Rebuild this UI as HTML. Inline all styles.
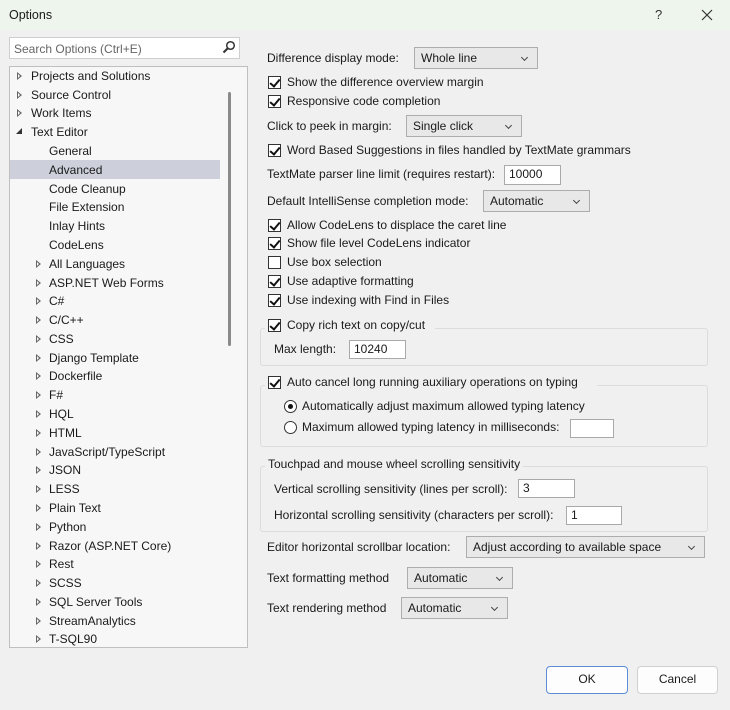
<!DOCTYPE html>
<html><head><meta charset="utf-8"><style>
*{box-sizing:border-box;margin:0;padding:0}
body{width:730px;height:710px;background:#f0f0f0;font-family:"Liberation Sans",sans-serif;font-size:12px;color:#1a1a1a;position:relative;overflow:hidden}
.a{position:absolute;white-space:nowrap}
.t{position:absolute;white-space:nowrap;line-height:14px;transform:translateY(-7px)}
.cb{position:absolute;width:13px;height:13px;border:1px solid #333;background:#fff;transform:translateY(-6px)}
.cb.on::after{content:"";position:absolute;left:3px;top:0px;width:4px;height:8px;border:solid #111;border-width:0 2px 2px 0;transform:rotate(40deg)}
.dd{position:absolute;background:#e8e8e8;border:1px solid #adadad;line-height:20px;padding-left:6px}
.dd::after{content:"";position:absolute;right:10px;top:7px;width:4px;height:4px;border:solid #444;border-width:0 1px 1px 0;transform:rotate(45deg)}
.in{position:absolute;background:#fff;border:1px solid #a9a9a9;line-height:17px;padding-left:4px}
.g{position:absolute;border:1px solid #dcdcdc;border-radius:3px}
.tr{position:absolute;left:31px;white-space:nowrap;line-height:14px;transform:translateY(-7px)}
.tri{position:absolute;left:17px;width:0;height:0;border-top:4px solid transparent;border-bottom:4px solid transparent;border-left:5px solid #666;transform:translateY(-4px)}
.tri::after{content:"";position:absolute;left:-4px;top:-2px;border-top:2px solid transparent;border-bottom:2px solid transparent;border-left:2.5px solid #fafafa}
.rb{position:absolute;width:13px;height:13px;border:1px solid #333;border-radius:50%;background:#fff;transform:translateY(-6px)}
.btn{position:absolute;background:#fdfdfd;border:1px solid #d0d0d0;border-radius:4px;text-align:center;line-height:25px}
</style></head><body>
<div class="a" style="left:0;top:0;width:730px;height:30px;background:#eef5ec"></div>
<div class="a" style="left:9px;top:8px;font-size:12.5px">Options</div>
<div class="a" style="left:655px;top:7px;font-size:13px;color:#333">?</div>
<svg class="a" style="left:701px;top:9px" width="12" height="12"><path d="M1 1L11 11M11 1L1 11" stroke="#333" stroke-width="1.2"/></svg>

<div class="a" style="left:9px;top:37px;width:231px;height:22px;background:#fff;border:1px solid #cfcfcf"></div>
<div class="a" style="left:14px;top:42px;color:#666">Search Options (Ctrl+E)</div>
<svg class="a" style="left:222px;top:40px" width="14" height="14"><circle cx="8.5" cy="5.5" r="3.8" fill="none" stroke="#333" stroke-width="1.5"/><path d="M6 8L1.5 12.5" stroke="#333" stroke-width="2"/></svg>

<div class="a" style="left:9px;top:66px;width:239px;height:582px;background:#f7f7f7;border:1px solid #bfbfbf"></div>
<div class="a" style="left:10px;top:160px;width:210px;height:19px;background:#cdd0da"></div>
<div class="a" style="left:228px;top:92px;width:3px;height:254px;background:#8a8a8a;border-radius:2px"></div>

<div class="tri" style="top:76px"></div><div class="tr" style="top:76px">Projects and Solutions</div>
<div class="tri" style="top:95px"></div><div class="tr" style="top:95px">Source Control</div>
<div class="tri" style="top:113px"></div><div class="tr" style="top:113px">Work Items</div>
<div class="a" style="left:16px;top:128px;border-left:6px solid transparent;border-bottom:6px solid #333"></div><div class="tr" style="top:132px">Text Editor</div>
<div class="tr" style="top:151px;left:49px">General</div>
<div class="tr" style="top:170px;left:49px">Advanced</div>
<div class="tr" style="top:189px;left:49px">Code Cleanup</div>
<div class="tr" style="top:207px;left:49px">File Extension</div>
<div class="tr" style="top:226px;left:49px">Inlay Hints</div>
<div class="tr" style="top:245px;left:49px">CodeLens</div>
<div class="tri" style="top:264px;left:36px"></div><div class="tr" style="top:264px;left:49px">All Languages</div>
<div class="tri" style="top:283px;left:36px"></div><div class="tr" style="top:283px;left:49px">ASP.NET Web Forms</div>
<div class="tri" style="top:301px;left:36px"></div><div class="tr" style="top:301px;left:49px">C#</div>
<div class="tri" style="top:320px;left:36px"></div><div class="tr" style="top:320px;left:49px">C/C++</div>
<div class="tri" style="top:339px;left:36px"></div><div class="tr" style="top:339px;left:49px">CSS</div>
<div class="tri" style="top:358px;left:36px"></div><div class="tr" style="top:358px;left:49px">Django Template</div>
<div class="tri" style="top:376px;left:36px"></div><div class="tr" style="top:376px;left:49px">Dockerfile</div>
<div class="tri" style="top:395px;left:36px"></div><div class="tr" style="top:395px;left:49px">F#</div>
<div class="tri" style="top:414px;left:36px"></div><div class="tr" style="top:414px;left:49px">HQL</div>
<div class="tri" style="top:433px;left:36px"></div><div class="tr" style="top:433px;left:49px">HTML</div>
<div class="tri" style="top:452px;left:36px"></div><div class="tr" style="top:452px;left:49px">JavaScript/TypeScript</div>
<div class="tri" style="top:470px;left:36px"></div><div class="tr" style="top:470px;left:49px">JSON</div>
<div class="tri" style="top:489px;left:36px"></div><div class="tr" style="top:489px;left:49px">LESS</div>
<div class="tri" style="top:508px;left:36px"></div><div class="tr" style="top:508px;left:49px">Plain Text</div>
<div class="tri" style="top:527px;left:36px"></div><div class="tr" style="top:527px;left:49px">Python</div>
<div class="tri" style="top:546px;left:36px"></div><div class="tr" style="top:546px;left:49px">Razor (ASP.NET Core)</div>
<div class="tri" style="top:564px;left:36px"></div><div class="tr" style="top:564px;left:49px">Rest</div>
<div class="tri" style="top:583px;left:36px"></div><div class="tr" style="top:583px;left:49px">SCSS</div>
<div class="tri" style="top:602px;left:36px"></div><div class="tr" style="top:602px;left:49px">SQL Server Tools</div>
<div class="tri" style="top:621px;left:36px"></div><div class="tr" style="top:621px;left:49px">StreamAnalytics</div>
<div class="tri" style="top:639px;left:36px"></div><div class="tr" style="top:639px;left:49px">T-SQL90</div>

<div class="t" style="left:267px;top:58px">Difference display mode:</div>
<div class="dd" style="left:414px;top:47px;width:124px;height:22px">Whole line</div>
<div class="cb on" style="left:268px;top:82px"></div><div class="t" style="left:287px;top:82px">Show the difference overview margin</div>
<div class="cb on" style="left:268px;top:101px"></div><div class="t" style="left:287px;top:101px">Responsive code completion</div>
<div class="t" style="left:267px;top:126px">Click to peek in margin:</div>
<div class="dd" style="left:406px;top:115px;width:116px;height:22px">Single click</div>
<div class="cb on" style="left:268px;top:150px"></div><div class="t" style="left:287px;top:150px">Word Based Suggestions in files handled by TextMate grammars</div>
<div class="t" style="left:267px;top:174px">TextMate parser line limit (requires restart):</div>
<div class="in" style="left:504px;top:165px;width:57px;height:20px">10000</div>
<div class="t" style="left:267px;top:201px">Default IntelliSense completion mode:</div>
<div class="dd" style="left:483px;top:190px;width:107px;height:22px">Automatic</div>
<div class="cb on" style="left:268px;top:225px"></div><div class="t" style="left:287px;top:225px">Allow CodeLens to displace the caret line</div>
<div class="cb on" style="left:268px;top:243px"></div><div class="t" style="left:287px;top:243px">Show file level CodeLens indicator</div>
<div class="cb" style="left:268px;top:262px"></div><div class="t" style="left:287px;top:262px">Use box selection</div>
<div class="cb on" style="left:268px;top:281px"></div><div class="t" style="left:287px;top:281px">Use adaptive formatting</div>
<div class="cb on" style="left:268px;top:300px"></div><div class="t" style="left:287px;top:300px">Use indexing with Find in Files</div>

<div class="g" style="left:260px;top:328px;width:448px;height:38px"></div>
<div class="a" style="left:265px;top:318px;width:170px;height:16px;background:#f0f0f0"></div>
<div class="cb on" style="left:268px;top:325px"></div><div class="t" style="left:287px;top:325px">Copy rich text on copy/cut</div>
<div class="t" style="left:274px;top:349px">Max length:</div>
<div class="in" style="left:349px;top:340px;width:57px;height:19px">10240</div>

<div class="g" style="left:260px;top:385px;width:448px;height:62px"></div>
<div class="a" style="left:265px;top:375px;width:332px;height:16px;background:#f0f0f0"></div>
<div class="cb on" style="left:268px;top:382px"></div><div class="t" style="left:287px;top:382px">Auto cancel long running auxiliary operations on typing</div>
<div class="rb" style="left:284px;top:406px"></div><div class="a" style="left:288px;top:404px;width:5px;height:5px;border-radius:50%;background:#111"></div>
<div class="t" style="left:302px;top:406px">Automatically adjust maximum allowed typing latency</div>
<div class="rb" style="left:284px;top:427px"></div><div class="t" style="left:302px;top:427px">Maximum allowed typing latency in milliseconds:</div>
<div class="in" style="left:570px;top:419px;width:44px;height:19px"></div>

<div class="g" style="left:260px;top:466px;width:448px;height:66px"></div>
<div class="a" style="left:265px;top:456px;width:258px;height:16px;background:#f0f0f0"></div>
<div class="t" style="left:268px;top:464px">Touchpad and mouse wheel scrolling sensitivity</div>
<div class="t" style="left:274px;top:489px">Vertical scrolling sensitivity (lines per scroll):</div>
<div class="in" style="left:518px;top:479px;width:57px;height:19px">3</div>
<div class="t" style="left:274px;top:515px">Horizontal scrolling sensitivity (characters per scroll):</div>
<div class="in" style="left:566px;top:506px;width:56px;height:19px">1</div>

<div class="t" style="left:267px;top:547px">Editor horizontal scrollbar location:</div>
<div class="dd" style="left:466px;top:536px;width:239px;height:22px">Adjust according to available space</div>
<div class="t" style="left:267px;top:578px">Text formatting method</div>
<div class="dd" style="left:407px;top:567px;width:106px;height:22px">Automatic</div>
<div class="t" style="left:267px;top:608px">Text rendering method</div>
<div class="dd" style="left:401px;top:597px;width:107px;height:22px">Automatic</div>

<div class="btn" style="left:546px;top:666px;width:82px;height:28px;border-color:#5b8ed6">OK</div>
<div class="btn" style="left:637px;top:666px;width:81px;height:28px">Cancel</div>
</body></html>
